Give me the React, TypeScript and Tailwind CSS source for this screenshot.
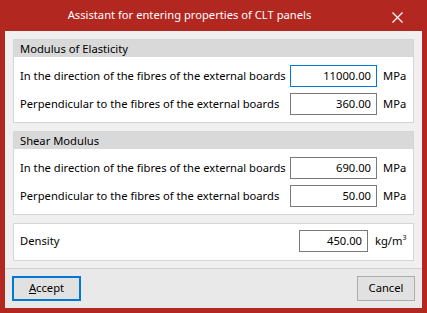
import React from 'react';

const font = { fontFamily: '"Segoe UI", "Noto Sans", "Open Sans", sans-serif' };

const Row = ({ label, value, unit, focused }: { label: string; value: string; unit: React.ReactNode; focused?: boolean }) => (
    <div className="flex items-center h-[22px]">
        <div className="flex-1 min-w-0 pl-[6px] text-[11.2px] text-black whitespace-nowrap">{label}</div>
        <div
            className={`w-[87px] h-[22px] shrink-0 bg-white flex items-center justify-end pr-[5px] text-[11.2px] text-black border ${
                focused ? 'border-[#0078d7]' : 'border-[#7a7a7a]'
            }`}
        >
            {value}
        </div>
        <div className="w-[36px] shrink-0 pl-[6px] text-[11.2px] text-black">{unit}</div>
    </div>
);

const Section = ({ title, children }: { title: string; children: React.ReactNode }) => (
    <div className="border border-[#d5d5d5] bg-white">
        <div className="h-[17px] bg-[#d9d9d9] pl-[6px] text-[11.2px] leading-[17px] text-black">{title}</div>
        <div className="flex flex-col gap-[6px] pt-[8px] pb-[7px]">{children}</div>
    </div>
);

const App = () => {
    return (
        <div className="w-[427px] h-[313px] bg-[#b2271f] flex flex-col px-[5px] pb-[5px]" style={font}>
            <div className="h-[31px] relative flex items-center justify-center pr-[48px] text-white text-[11.2px]">
                Assistant for entering properties of CLT panels
                <svg className="absolute right-[19px] top-[12px]" width="11" height="11" viewBox="0 0 11 11">
                    <path d="M0.5 0.5 L10.5 10.5 M10.5 0.5 L0.5 10.5" stroke="white" strokeWidth="1.2" />
                </svg>
            </div>
            <div className="flex-1 bg-[#f0f0f0] flex flex-col">
                <div className="flex flex-col gap-[8px] px-[8px] pt-[8px]">
                    <Section title="Modulus of Elasticity">
                        <Row label="In the direction of the fibres of the external boards" value="11000.00" unit="MPa" focused />
                        <Row label="Perpendicular to the fibres of the external boards" value="360.00" unit="MPa" />
                    </Section>
                    <Section title="Shear Modulus">
                        <Row label="In the direction of the fibres of the external boards" value="690.00" unit="MPa" />
                        <Row label="Perpendicular to the fibres of the external boards" value="50.00" unit="MPa" />
                    </Section>
                    <div className="border border-[#d5d5d5] bg-white pt-[6px] pb-[8px]">
                        <div className="flex items-center h-[22px]">
                            <div className="flex-1 pl-[6px] text-[11.2px] text-black">Density</div>
                            <div className="w-[69px] h-[22px] shrink-0 bg-white flex items-center justify-end pr-[5px] text-[11.2px] text-black border border-[#7a7a7a]">
                                450.00
                            </div>
                            <div className="w-[45px] shrink-0 pl-[7px] text-[11.2px] text-black">
                                kg/m<span className="relative -top-[5px] text-[7px]">3</span>
                            </div>
                        </div>
                    </div>
                </div>
                <div className="mt-[7px] flex-1 border-t border-[#d0d0d0] bg-[#e9e9e9] flex items-start justify-between px-[7px] pt-[7px]">
                    <button className="w-[69px] h-[25px] border-2 border-[#0078d7] bg-[#e1e1e1] text-[11.2px] text-black">
                        <span className="underline">A</span>ccept
                    </button>
                    <button className="w-[58px] h-[25px] border border-[#adadad] bg-[#e1e1e1] text-[11.2px] text-black">
                        Cancel
                    </button>
                </div>
            </div>
        </div>
    );
};

export default App;
